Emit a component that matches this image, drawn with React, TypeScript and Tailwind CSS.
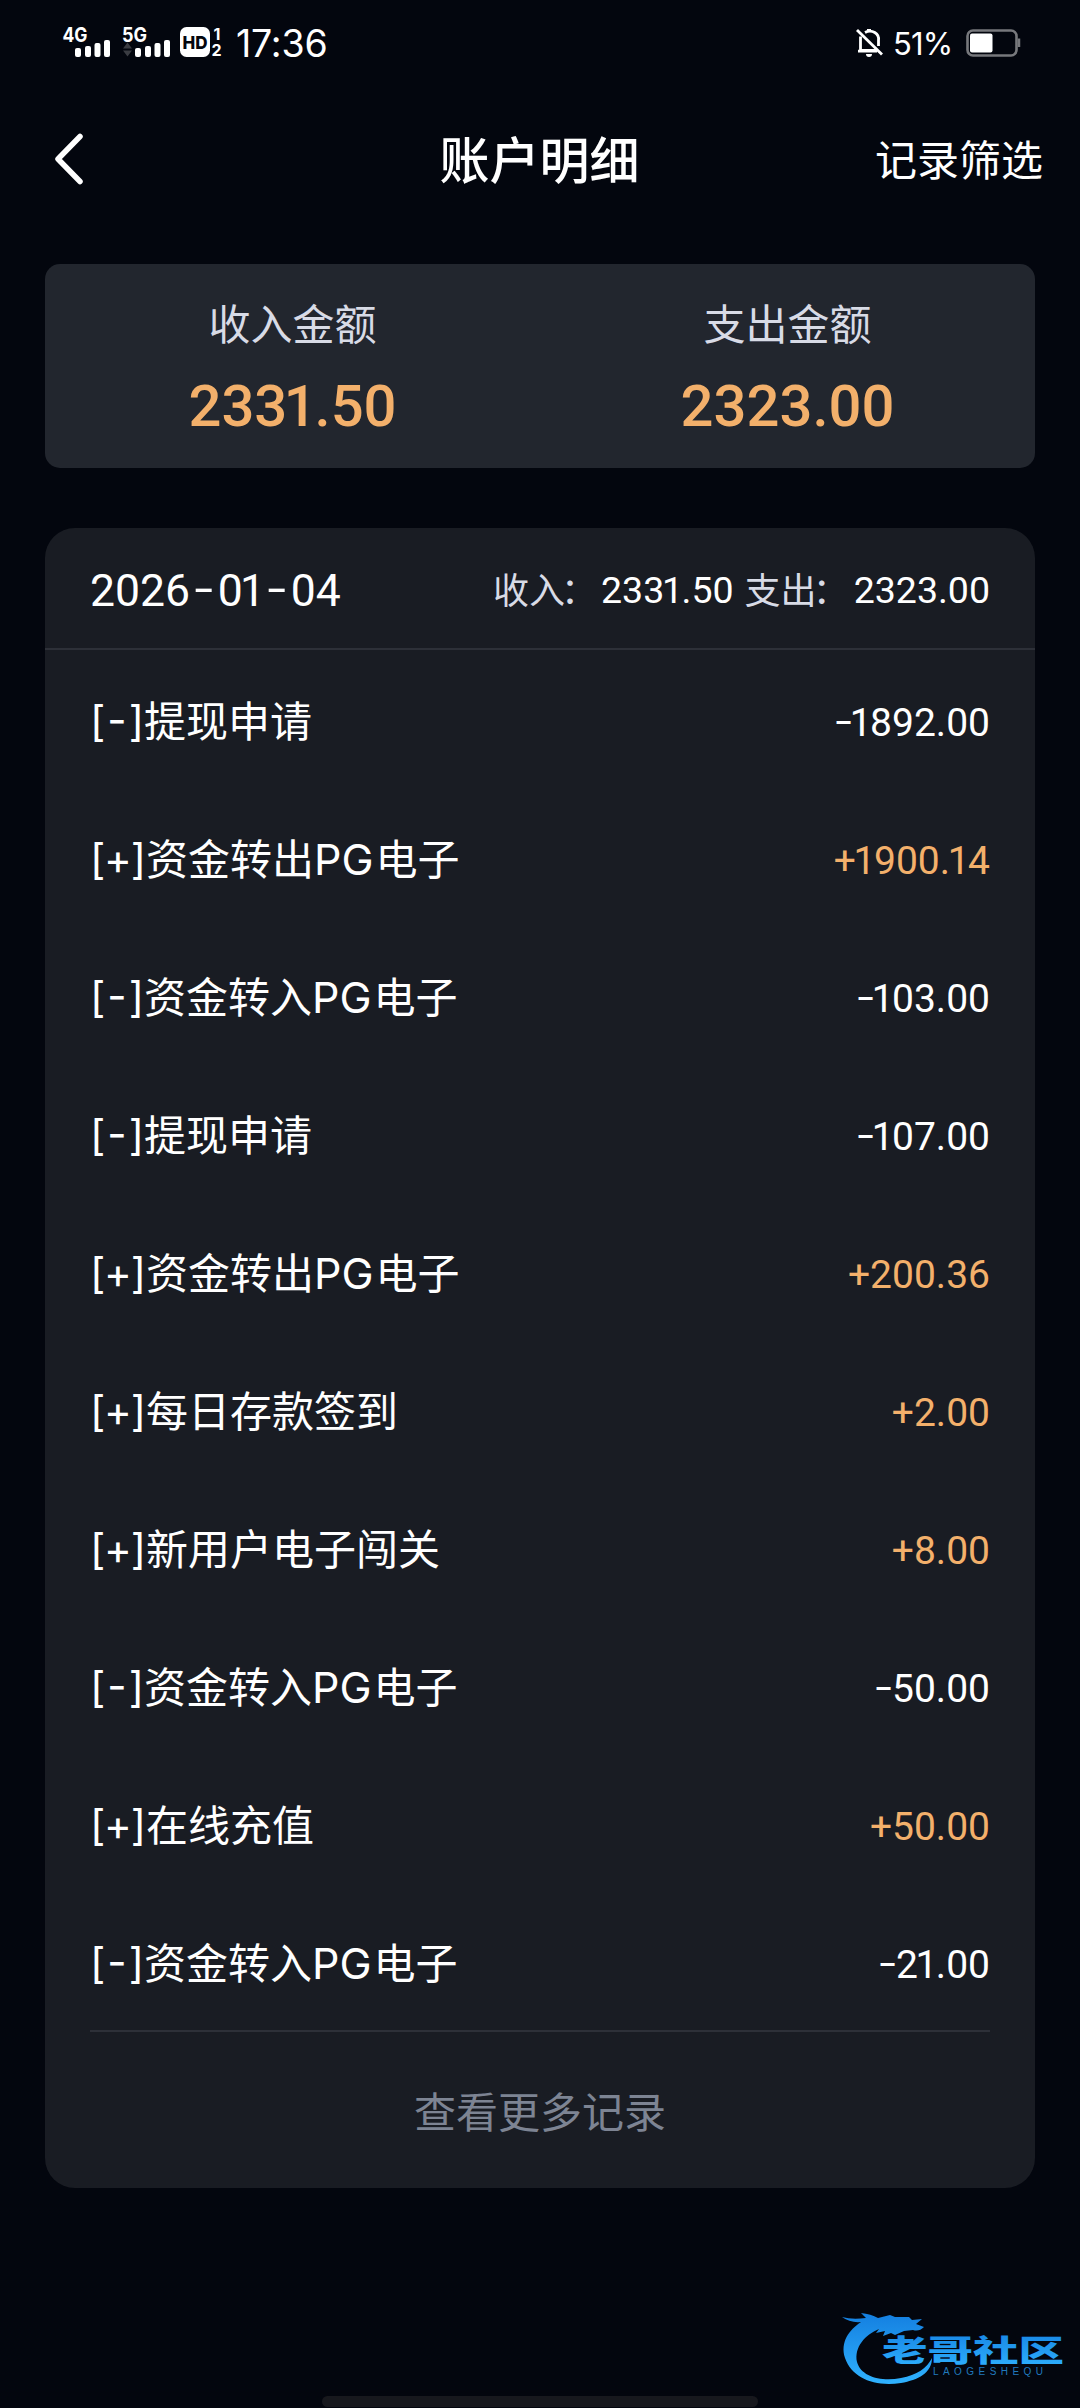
import React from 'react';

interface IRecord {
	title: string;
	amount: string;
}

const records: IRecord[] = [
	{ title: '提现申请', amount: '-1892.00' },
	{ title: '资金转出PG电子', amount: '+1900.14' },
	{ title: '资金转入PG电子', amount: '-103.00' },
	{ title: '提现申请', amount: '-107.00' },
	{ title: '资金转出PG电子', amount: '+200.36' },
	{ title: '每日存款签到', amount: '+2.00' },
	{ title: '新用户电子闯关', amount: '+8.00' },
	{ title: '资金转入PG电子', amount: '-50.00' },
	{ title: '在线充值', amount: '+50.00' },
	{ title: '资金转入PG电子', amount: '-21.00' },
];

// digits with a tighter "1" and a raised minus
const Digits = ({ value, wide }: { value: string; wide?: boolean }) => (
	<span className="font-['Roboto',sans-serif] whitespace-nowrap">
		{value.split('').map((char, idx) => {
			if (char === '1') {
				return (
					<span key={idx} className="-ml-[0.06em] -mr-[0.04em]">
						{char}
					</span>
				);
			}
			if (char === '-') {
				return (
					<span
						key={idx}
						className={`inline-block text-center -translate-y-[0.05em] scale-x-150 ${
							wide ? 'w-[0.62em]' : 'w-[0.44em]'
						}`}
					>
						{char}
					</span>
				);
			}
			return <span key={idx}>{char}</span>;
		})}
	</span>
);

const SignalIcons = () => (
	<svg
		width="164"
		height="40"
		viewBox="60 22 164 40"
		fill="#fff"
		className="font-['Inter',sans-serif]"
	>
		<text x="62.5" y="41.5" fontSize="20" fontWeight="700" textLength="25" lengthAdjust="spacingAndGlyphs">
			4G
		</text>
		<rect x="75" y="48" width="6" height="9" rx="2" />
		<rect x="85" y="46" width="6" height="11" rx="2" />
		<rect x="94.5" y="43" width="6" height="14" rx="2" />
		<rect x="104" y="40" width="6" height="17" rx="2" />
		<text x="122" y="41.5" fontSize="20" fontWeight="700" textLength="25" lengthAdjust="spacingAndGlyphs">
			5G
		</text>
		<path d="M123 48.5l4.5-6 4.5 6zM123 50.5l4.5 6 4.5-6z" fill="#3a3c42" />
		<rect x="135" y="48" width="6" height="9" rx="2" />
		<rect x="145" y="46" width="6" height="11" rx="2" />
		<rect x="154.5" y="43" width="6" height="14" rx="2" />
		<rect x="164" y="40" width="6" height="17" rx="2" />
		<rect x="180" y="27" width="30" height="30" rx="6.5" />
		<text x="182.5" y="48.5" fontSize="18" fontWeight="800" fill="#03060e" textLength="25" lengthAdjust="spacingAndGlyphs">
			HD
		</text>
		<text x="213.5" y="39.5" fontSize="16" fontWeight="700">
			1
		</text>
		<text x="211.5" y="56" fontSize="16" fontWeight="700">
			2
		</text>
	</svg>
);

const BellOff = () => (
	<svg width="28" height="30" viewBox="0 0 28 30" fill="none" stroke="#fff" strokeWidth="2.8">
		<path d="M4.5 8.5V22.5H20M2 23.2h19" />
		<path d="M9 4.500C16 1 23.500 5.500 22.500 12.500V18" />
		<path d="M13 1v3" strokeWidth="4" />
		<path d="M1 2l25 24.500" />
		<path d="M10 26h6a3 3 0 0 1-6 0z" fill="#fff" stroke="none" />
	</svg>
);

const Battery = () => (
	<svg width="55" height="28" viewBox="0 0 55 28" fill="none">
		<rect x="1.5" y="1.5" width="49" height="25" rx="5.5" stroke="#77787c" strokeWidth="2.6" />
		<rect x="4" y="4.5" width="22.5" height="19" rx="2" fill="#fff" />
		<path d="M53 9.500v8.500" stroke="#77787c" strokeWidth="2.5" />
	</svg>
);

const StatusBar = () => (
	<div className="flex h-[84px] items-center pl-[60px] pr-[59px]">
		<SignalIcons />
		<span className="ml-[12px] mt-[4px] font-['Inter',sans-serif] text-[37.5px] leading-none tracking-[-0.2px]">
			17:36
		</span>
		<div className="ml-auto flex items-center pt-[2px]">
			<BellOff />
			<span className="ml-[9px] w-[62px] font-['Inter',sans-serif] text-[31px] leading-none tracking-[-0.8px]">
				51%
			</span>
			<span className="ml-[11px]">
				<Battery />
			</span>
		</div>
	</div>
);

const Header = () => (
	<header className="grid h-[150px] grid-cols-3 items-center pl-[54px] pr-[37px]">
		<svg width="32" height="52" viewBox="0 0 32 52" fill="none" stroke="#fff" strokeWidth="5.5" strokeLinecap="round" strokeLinejoin="round">
			<path d="M26 3.500L4 26l22 22.500" />
		</svg>
		<h1 className="-mt-[3px] ml-[-18px] text-center text-[50px] font-medium">账户明细</h1>
		<span className="-mt-[3px] text-right text-[42px]">记录筛选</span>
	</header>
);

const SummaryItem = ({ label, value }: { label: string; value: string }) => (
	<div className="flex flex-1 flex-col items-center pt-[28px]">
		<span className="text-[42px] leading-[60px] text-[#d8dbe6]">{label}</span>
		<span className="mt-[15px] text-[58px] font-medium leading-[68px] text-[#f3b06b]">
			<Digits value={value} />
		</span>
	</div>
);

const RecordRow = ({ title, amount }: IRecord) => {
	const isIncome = amount.startsWith('+');

	return (
		<li className="flex h-[138px] items-center justify-between">
			<span className="flex h-[60px] -translate-y-[3px] text-[42px] leading-[60px]">
				<span
					className={`flex justify-between pt-[2px] font-['Inter',sans-serif] ${
						isIncome ? 'w-[56px]' : 'w-[54px]'
					}`}
				>
					<span>[</span>
					<span className={isIncome ? '-mx-[4px]' : '-mx-[2px] -translate-y-[1px]'}>
						{amount[0]}
					</span>
					<span>]</span>
				</span>
				<span className="whitespace-nowrap">
					{title.split('PG').map((part, idx) => (
						<React.Fragment key={idx}>
							{idx > 0 && (
								<span className="mr-[2px] font-['Inter',sans-serif] text-[43px] leading-none">
									PG
								</span>
							)}
							{part}
						</React.Fragment>
					))}
				</span>
			</span>
			<span
				className={`-translate-y-[1.5px] text-[39px] ${isIncome ? 'text-[#f3b06b]' : ''}`}
			>
				<Digits value={amount} />
			</span>
		</li>
	);
};

const Watermark = () => (
	<svg width="226" height="84" viewBox="840 2304 226 84">
		<defs>
			<linearGradient id="blue" x1="0" y1="0" x2="0" y2="1">
				<stop offset="0" stopColor="#147fe0" />
				<stop offset="1" stopColor="#2fb2ff" />
			</linearGradient>
		</defs>
		<path
			fill="url(#blue)"
			d="M842 2317q10 3 24 1l-5-5q10 1 17 5l12-3 5 2 14 0 3 3 10-1-6 5 8 3q-5 5-11 3l-9 1-9 4-4-2-8 3 2-5-9 2 3-4c-14 6-25 18-22 33 4 15 25 20 44 16 16-3 26-10 31-20 0 15-14 22-31 25-27 4-49-5-56-25-5-16 4-28 16-36q-11 1-19-5z"
		/>
		<text
			x="882"
			y="2361"
			fill="url(#blue)"
			fontSize="30"
			fontWeight="900"
			textLength="182"
			lengthAdjust="spacingAndGlyphs"
			className="font-['Noto_Sans_CJK_SC',sans-serif]"
		>
			老哥社区
		</text>
		<text x="933" y="2374.500" fill="#2079bd" fontSize="10" textLength="110" className="font-['Liberation_Sans',sans-serif]">
			LAOGESHEQU
		</text>
	</svg>
);

const App = () => {
	return (
		<div className="flex h-[2408px] w-[1080px] flex-col overflow-hidden bg-[#03060e] font-['Noto_Sans_CJK_SC',sans-serif] text-white">
			<StatusBar />
			<Header />

			<section className="mx-[45px] mt-[30px] flex h-[204px] rounded-[15px] bg-[#22262e]">
				<SummaryItem label="收入金额" value="2331.50" />
				<SummaryItem label="支出金额" value="2323.00" />
			</section>

			<section className="mx-[45px] mt-[60px] h-[1660px] rounded-[30px] bg-[#191c23]">
				<div className="flex h-[122px] items-center justify-between border-b-2 border-[#2d3038] px-[45px]">
					<span className="translate-y-[1px] text-[44.5px]">
						<Digits value="2026-01-04" wide />
					</span>
					<span className="flex items-center text-[36px] text-[#d8dbe6]">
						收入<span className="-ml-[4px] mr-[4px]">：</span>
						<span className="translate-y-[1px] text-[37.5px] text-white">
							<Digits value="2331.50" />
						</span>
						<span className="ml-[11px]">支出</span>
						<span className="-ml-[4px] mr-[5px]">：</span>
						<span className="translate-y-[1px] text-[37.5px] text-white">
							<Digits value="2323.00" />
						</span>
					</span>
				</div>
				<ul className="mx-[45px] mt-[3px] h-[1379px] border-b-2 border-[#2d3038]">
					{records.map((record, idx) => (
						<RecordRow key={idx} {...record} />
					))}
				</ul>
				<button className="block h-[154px] w-full text-center text-[42px] text-[#7d8493]">
					查看更多记录
				</button>
			</section>

			<footer className="mt-auto flex flex-col">
				<div className="mr-[14px] self-end">
					<Watermark />
				</div>
				<div className="mt-[8px] mb-[1px] ml-[322px] h-[11px] w-[436px] rounded-full bg-[#17181d]" />
			</footer>
		</div>
	);
};

export default App;
